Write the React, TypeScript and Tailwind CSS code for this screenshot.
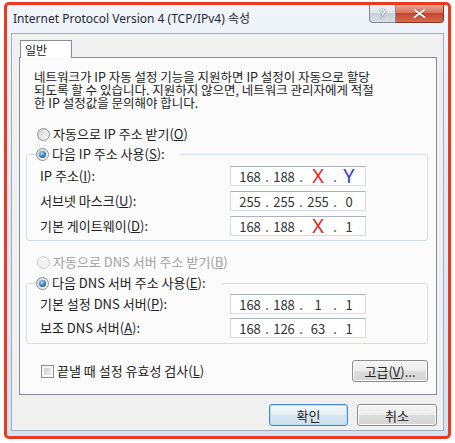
import { Fragment, type ReactNode } from 'react'

const KR = "font-['Noto_Sans_CJK_KR',sans-serif]"

function Radio({ checked, disabled }: { checked?: boolean; disabled?: boolean }) {
  return (
    <span
      className={`w-[13px] h-[13px] rounded-full border flex items-center justify-center shrink-0 ${
        disabled
          ? 'border-[#c9c9c9] bg-[#f3f3f3]'
          : 'border-[#8e8f8f] bg-[linear-gradient(135deg,#d2d2d2,#fbfbfb)]'
      }`}
    >
      {checked && (
        <span className="w-[7px] h-[7px] rounded-full bg-[radial-gradient(circle_at_40%_35%,#a6dcff,#2a6fb8_60%,#17467f)]" />
      )}
    </span>
  )
}

function IpField({ parts }: { parts: ReactNode[] }) {
  return (
    <div className="w-[136px] h-[20px] border border-[#d6dce3] border-t-[#abb2bb] bg-white flex items-center pl-[4px] text-[13px] leading-none text-[#333]">
      {parts.map((p, i) => (
        <Fragment key={i}>
          {i > 0 && <span className="w-[4px] text-center">.</span>}
          <span className={`${i === 3 ? 'w-[24px]' : 'w-[30px]'} text-center`}>{p}</span>
        </Fragment>
      ))}
    </div>
  )
}

const X = <span className="text-[20px] leading-none text-[#e8261c] font-['Noto_Sans',sans-serif]">X</span>
const Y = <span className="text-[20px] leading-none text-[#3b3bd6] font-['Noto_Sans',sans-serif]">Y</span>

function Row({ label, parts }: { label: ReactNode; parts: ReactNode[] }) {
  return (
    <div className="flex items-center h-[20px]">
      <div className="w-[203px] pl-[13px] text-[13px] text-[#222]">{label}</div>
      <IpField parts={parts} />
    </div>
  )
}

function WinButton({ children, primary, className = '' }: { children: ReactNode; primary?: boolean; className?: string }) {
  return (
    <button
      className={`h-[22px] rounded-[3px] border text-[13px] leading-none text-[#222] flex items-center justify-center ${
        primary
          ? 'border-[#4a88c2] bg-[linear-gradient(#f3f8fc,#e4eef6_50%,#d6e5f1_51%,#cfe0ee)] shadow-[inset_0_0_0_1px_#b9ddf7]'
          : 'border-[#8c8c8c] bg-[linear-gradient(#f4f4f4,#ececec_50%,#dedede_51%,#d3d3d3)] shadow-[inset_0_0_0_1px_#fbfbfb]'
      } ${className}`}
    >
      {children}
    </button>
  )
}

const intro = [
  '네트워크가 IP 자동 설정 기능을 지원하면 IP 설정이 자동으로 할당',
  '되도록 할 수 있습니다. 지원하지 않으면, 네트워크 관리자에게 적절',
  '한 IP 설정값을 문의해야 합니다.',
]

export default function App() {
  return (
    <div className={`w-[455px] h-[443px] bg-white pt-[2px] pl-[4px] overflow-hidden ${KR}`}>
      <div className="w-[447px] h-[437px] border-[3px] border-[#ec3a20] rounded-[5px] bg-[linear-gradient(#f1f5fa,#e2ebf6_40%,#d2e2f3)] flex flex-col">
        {/* title bar */}
        <div className="h-[28px] flex items-start shrink-0">
          <div className="pl-[6px] pt-[6px] text-[12px] leading-[16px] text-[#1f2a36] font-['Noto_Sans','Noto_Sans_CJK_KR',sans-serif] whitespace-nowrap">
            Internet Protocol Version 4 (TCP/IPv4) 속성
          </div>
          <div className="ml-auto mr-[4px] flex">
            <div className="w-[27px] h-[18px] border border-t-0 border-[#7d8896] rounded-bl-[4px] bg-[linear-gradient(#f1f4f7,#dde3ea_45%,#c7d0da_50%,#d8dfe7)] flex items-center justify-center text-[13px] font-bold leading-none text-[#f4f6f8] [text-shadow:0_0_1px_#4d5866,0_0_1px_#4d5866]">
              ?
            </div>
            <div className="w-[48px] h-[18px] border border-t-0 border-l-0 border-[#8a3426] rounded-br-[4px] bg-[linear-gradient(#eaa595,#d8735c_45%,#c4462e_50%,#d66a4d)] flex items-center justify-center">
              <svg width="13" height="9" viewBox="0 0 13 9">
                <path d="M1.5 0.8 L11.5 8.2 M11.5 0.8 L1.5 8.2" stroke="#5a1d13" strokeWidth="3.2" strokeLinecap="round" opacity="0.5" />
                <path d="M1.5 0.8 L11.5 8.2 M11.5 0.8 L1.5 8.2" stroke="#ffffff" strokeWidth="2" strokeLinecap="round" />
              </svg>
            </div>
          </div>
        </div>

        {/* client area */}
        <div className="mx-[4px] mb-[5px] flex-1 border border-[#a3adb9] bg-[#f0f0f0] pt-[6px] pl-[7px] pr-[6px] flex flex-col">
          <div className="flex">
            <div className="ml-[1px] w-[52px] h-[18px] -mb-[1px] relative z-10 border border-b-0 border-[#898c95] bg-white pl-[4px] text-[12px] leading-[17px] text-[#222]">
              일반
            </div>
          </div>
          <div className="h-[338px] border border-[#898c95] bg-[#fbfbfb] flex flex-col">
            <div className="pl-[14px] pt-[12px] text-[12.5px] text-[#222] whitespace-nowrap">
              {intro.map((line) => (
                <div key={line} className="h-[13px] leading-[13px]">
                  {line}
                </div>
              ))}
            </div>

            <div className="mt-[17px] ml-[17px] h-[16px] flex items-center gap-[3px] text-[13px] text-[#222]">
              <Radio />
              <span>
                자동으로 IP 주소 받기(<u>O</u>)
              </span>
            </div>

            <fieldset className="mt-[4px] ml-[6px] w-[402px] border border-[#d5dee6] rounded-[3px]">
              <legend className="ml-[9px] pr-[15px] h-[16px] flex items-center gap-[3px] text-[13px] text-[#222]">
                <Radio checked />
                <span>
                  다음 IP 주소 사용(<u>S</u>):
                </span>
              </legend>
              <div className="pt-[4px] pb-[4px] flex flex-col gap-[5px]">
                <Row label={<>IP 주소(<u>I</u>):</>} parts={['168', '188', X, Y]} />
                <Row label={<>서브넷 마스크(<u>U</u>):</>} parts={['255', '255', '255', '0']} />
                <Row label={<>기본 게이트웨이(<u>D</u>):</>} parts={['168', '188', X, '1']} />
              </div>
            </fieldset>

            <div className="mt-[13px] ml-[17px] h-[16px] flex items-center gap-[3px] text-[13px] text-[#a2a2a2]">
              <Radio disabled />
              <span>
                자동으로 DNS 서버 주소 받기(<u>B</u>)
              </span>
            </div>

            <fieldset className="mt-[5px] ml-[6px] w-[402px] border border-[#d5dee6] rounded-[3px]">
              <legend className="ml-[9px] pr-[15px] h-[16px] flex items-center gap-[3px] text-[13px] text-[#222]">
                <Radio checked />
                <span>
                  다음 DNS 서버 주소 사용(<u>E</u>):
                </span>
              </legend>
              <div className="pt-[3px] pb-[5px] flex flex-col gap-[4px]">
                <Row label={<>기본 설정 DNS 서버(<u>P</u>):</>} parts={['168', '188', '1', '1']} />
                <Row label={<>보조 DNS 서버(<u>A</u>):</>} parts={['168', '126', '63', '1']} />
              </div>
            </fieldset>

            <div className="mt-[16px] h-[22px] flex items-center">
              <span className="ml-[21px] w-[13px] h-[13px] border border-[#8e8f8f] bg-[#f6f6f6] p-[2px] shrink-0">
                <span className="block w-full h-full bg-[linear-gradient(135deg,#cfcfcf,#f0f0f0)]" />
              </span>
              <span className="ml-[3px] text-[13px] text-[#222]">
                끝낼 때 설정 유효성 검사(<u>L</u>)
              </span>
              <WinButton className="ml-auto mr-[8px] w-[76px]">
                고급(<u>V</u>)...
              </WinButton>
            </div>
          </div>

          <div className="mt-[9px] flex justify-end gap-[9px]">
            <WinButton primary className="w-[79px]">
              확인
            </WinButton>
            <WinButton className="w-[80px]">취소</WinButton>
          </div>
        </div>
      </div>
    </div>
  )
}
